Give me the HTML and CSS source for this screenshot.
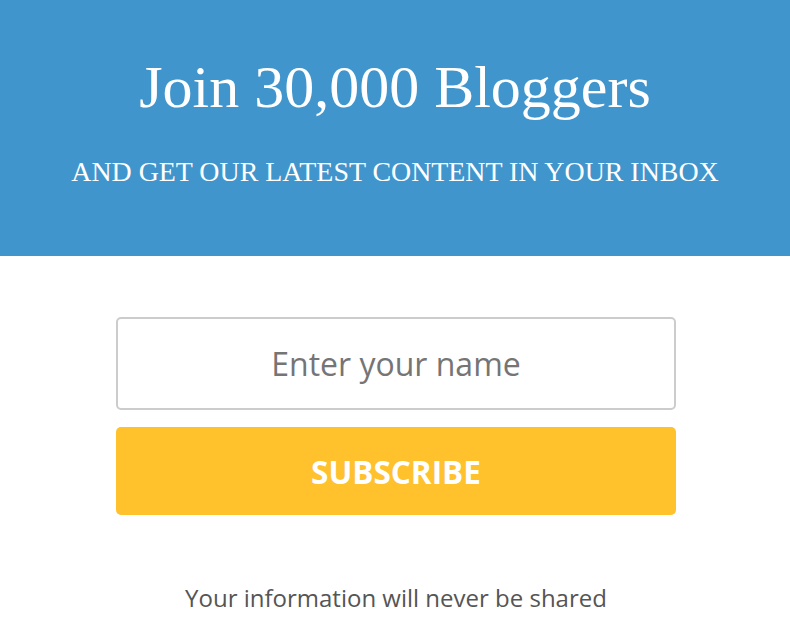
FILE: index.html
```html
<!DOCTYPE html>
<html>
<head>
<meta charset="utf-8">
<link rel="stylesheet" href="styles.css">
</head>
<body>
<header class="hero">
  <h1 class="hero-title">Join 30,000 Bloggers</h1>
  <p class="hero-sub">AND GET OUR LATEST CONTENT IN YOUR INBOX</p>
</header>
<main class="signup">
  <form class="signup-form">
    <input class="name-input" type="text" placeholder="Enter your name">
    <button class="subscribe-btn" type="button">SUBSCRIBE</button>
  </form>
  <p class="note">Your information will never be shared</p>
</main>
</body>
</html>
```
FILE: styles.css
```css
html, body {
  margin: 0;
  padding: 0;
  background: #ffffff;
}
.hero {
  height: 256px;
  box-sizing: border-box;
  background: #4096cc;
  color: #ffffff;
  text-align: center;
  font-family: "Liberation Serif", "Times New Roman", serif;
  padding-top: 52px;
}
.hero-title {
  margin: 0;
  font-weight: normal;
  font-size: 60px;
  line-height: 70px;
}
.hero-sub {
  margin: 34px 0 0;
  font-size: 27.9px;
  line-height: 32px;
}
.signup {
  display: flex;
  flex-direction: column;
  align-items: center;
  padding-top: 61px;
  padding-left: 2px;
  font-family: "Open Sans", sans-serif;
}
.signup-form {
  display: flex;
  flex-direction: column;
  gap: 17px;
  width: 560px;
}
.name-input {
  box-sizing: border-box;
  width: 100%;
  height: 93px;
  border: 2px solid #cccccc;
  border-radius: 5px;
  text-align: center;
  font-family: "Open Sans", sans-serif;
  font-size: 32px;
  color: #555;
  outline: none;
}
.name-input::placeholder {
  color: #757575;
}
.subscribe-btn {
  height: 88px;
  border: none;
  border-radius: 5px;
  background: #ffc12c;
  color: #ffffff;
  font-family: "Open Sans", sans-serif;
  font-weight: 700;
  font-size: 31.5px;
}
.note {
  margin: 67px 0 0;
  font-size: 24px;
  line-height: 32px;
  color: #555555;
}
```
